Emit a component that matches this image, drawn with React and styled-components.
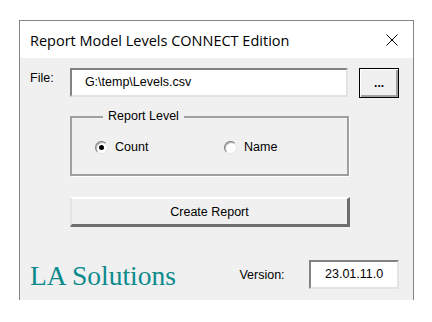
import React from 'react';
import styled, { createGlobalStyle } from 'styled-components';

const GlobalStyle = createGlobalStyle`
  html, body {
    margin: 0;
    padding: 0;
    background: #ffffff;
  }
`;

const Window = styled.div`
  box-sizing: border-box;
  width: 395px;
  height: 280px;
  margin: 20px 0 0 19px;
  border: 1px solid #858585;
  border-bottom: none;
  background: #f0f0f0;
  display: flex;
  flex-direction: column;
  font-family: "Liberation Sans", Arial, sans-serif;
  font-size: 12.5px;
  color: #000;
`;

const TitleBar = styled.div`
  height: 37px;
  background: #ffffff;
  display: flex;
  align-items: center;
  justify-content: space-between;
  padding: 0 15px 0 10px;
`;

const Title = styled.div`
  font-family: "Open Sans", "Noto Sans", sans-serif;
  font-size: 14.5px;
  color: #000;
  padding-top: 1px;
`;

const CloseIcon = styled.svg`
  width: 12px;
  height: 12px;
  display: block;
`;

const Body = styled.div`
  flex: 1;
  display: flex;
  flex-direction: column;
  padding: 10px 14px 0 10px;
`;

const FileRow = styled.div`
  display: flex;
  align-items: flex-start;
`;

const Label = styled.span`
  width: ${(p) => p.$width || 'auto'};
  padding-top: ${(p) => p.$top || '0'};
`;

const Sunken = styled.div`
  box-sizing: border-box;
  width: ${(p) => p.$width};
  height: 29px;
  background: #ffffff;
  border-top: 2px solid #828282;
  border-left: 2px solid #828282;
  border-right: 2px solid #e3e3e3;
  border-bottom: 2px solid #e3e3e3;
  display: flex;
  align-items: center;
  justify-content: ${(p) => (p.$center ? 'center' : 'flex-start')};
  padding-left: ${(p) => (p.$center ? '0' : '13px')};
  padding-bottom: 2px;
`;

const DotsButton = styled.button`
  box-sizing: border-box;
  width: 40px;
  height: 30px;
  margin-left: 11px;
  padding: 0 0 7px 0;
  border: 1px solid #000;
  background: #f0f0f0;
  box-shadow: inset 1px 1px 0 #ffffff, inset -2px -2px 0 #a0a0a0;
  font-family: "Liberation Sans", Arial, sans-serif;
  font-weight: bold;
  font-size: 12px;
  color: #000;
  display: flex;
  align-items: flex-end;
  justify-content: center;
`;

const Group = styled.fieldset`
  box-sizing: border-box;
  width: 279px;
  margin: 11px 0 0 40px;
  padding: 0 0 19px 23px;
  border: 2px solid #a0a0a0;
  box-shadow: 1px 1px 0 #ffffff;
`;

const Legend = styled.legend`
  margin-left: 8px;
  padding: 0 5px;
  line-height: 15px;
`;

const Options = styled.div`
  display: flex;
  align-items: center;
  margin-top: 15px;
  height: 16px;
`;

const Option = styled.label`
  display: flex;
  align-items: center;
  gap: 7px;
  width: ${(p) => p.$width || 'auto'};
`;

const RadioCircle = styled.span`
  box-sizing: border-box;
  width: 13px;
  height: 13px;
  border-radius: 50%;
  background: #ffffff;
  border: 1px solid;
  border-color: #7a7a7a #e6e6e6 #e6e6e6 #7a7a7a;
  box-shadow: inset 1px 1px 0 #b5b5b5;
  display: flex;
  align-items: center;
  justify-content: center;

  &::after {
    content: '';
    width: 5px;
    height: 5px;
    border-radius: 50%;
    background: ${(p) => (p.$checked ? '#000' : 'transparent')};
  }
`;

const CreateButton = styled.button`
  box-sizing: border-box;
  width: 280px;
  height: 30px;
  margin: 21px 0 0 40px;
  padding: 0;
  background: #f0f0f0;
  border-style: solid;
  border-width: 2px 3px 3px 2px;
  border-color: #ffffff #6e6e6e #6e6e6e #e3e3e3;
  font-family: "Liberation Sans", Arial, sans-serif;
  font-size: 12.5px;
  color: #000;
`;

const Footer = styled.div`
  display: flex;
  align-items: center;
  margin-top: 30px;
`;

const Brand = styled.div`
  font-family: "Liberation Serif", "Times New Roman", serif;
  font-size: 27.5px;
  color: #0b8a8c;
  width: 210px;
  margin-top: 3px;
`;

export default function App() {
  return (
    <>
      <GlobalStyle />
      <Window>
        <TitleBar>
          <Title>Report Model Levels CONNECT Edition</Title>
          <CloseIcon viewBox="0 0 12 12">
            <path d="M0.5 0.5 L11.5 11.5 M11.5 0.5 L0.5 11.5" stroke="#000" strokeWidth="1" fill="none" />
          </CloseIcon>
        </TitleBar>
        <Body>
          <FileRow>
            <Label $width="40px" $top="3px">File:</Label>
            <Sunken $width="279px">G:\temp\Levels.csv</Sunken>
            <DotsButton>...</DotsButton>
          </FileRow>
          <Group>
            <Legend>Report Level</Legend>
            <Options>
              <Option $width="129px">
                <RadioCircle $checked />
                Count
              </Option>
              <Option>
                <RadioCircle />
                Name
              </Option>
            </Options>
          </Group>
          <CreateButton>Create Report</CreateButton>
          <Footer>
            <Brand>LA Solutions</Brand>
            <Label $width="70px">Version:</Label>
            <Sunken $width="90px" $center>23.01.11.0</Sunken>
          </Footer>
        </Body>
      </Window>
    </>
  );
}
